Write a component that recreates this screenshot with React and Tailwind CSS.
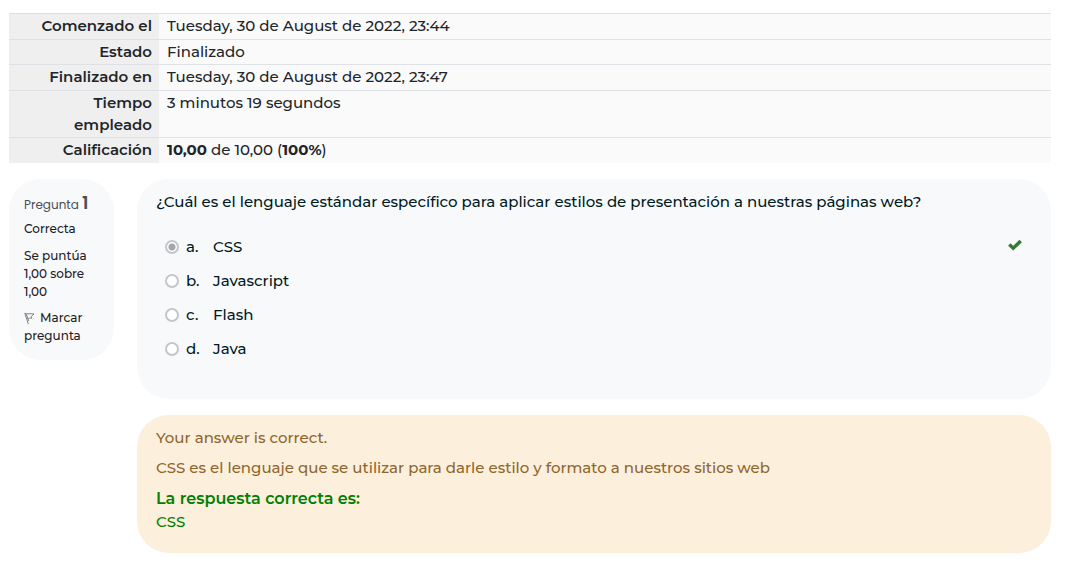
import React from 'react';

const attempt = [
  ['Comenzado el', 'Tuesday, 30 de August de 2022, 23:44'],
  ['Estado', 'Finalizado'],
  ['Finalizado en', 'Tuesday, 30 de August de 2022, 23:47'],
  ['Tiempo empleado', '3 minutos 19 segundos'],
  ['Calificación', <><b className="font-bold">10,00</b> de 10,00 (<b className="font-bold">100%</b>)</>],
];

const options = [
  ['a', 'CSS'],
  ['b', 'Javascript'],
  ['c', 'Flash'],
  ['d', 'Java'],
];

function Summary() {
  return (
    <table className="h-[150px] w-full border-collapse bg-[#fafafa] text-[#212529]">
      <tbody>
        {attempt.map(([label, value]) => (
          <tr key={label} className="border-t border-[#dee2e6] align-top">
            <th scope="row" className="w-[150px] bg-[#efefef] py-px pr-[7px] pl-6 text-right font-semibold">{label}</th>
            <td className="px-2 py-px">{value}</td>
          </tr>
        ))}
      </tbody>
    </table>
  );
}

function Info() {
  return (
    <aside className="w-[105px] shrink-0 rounded-[32px] bg-[#f8f9fb] px-[15px] pt-3 pb-[15px] text-[12px] leading-[18px] text-[#1d2125]">
      <h3 className="font-[Poppins,Inter,sans-serif] font-normal leading-6 whitespace-nowrap text-[#495057]">
        Pregunta <span className="text-[18px] font-semibold">1</span>
      </h3>
      <p className="mt-[3px]">Correcta</p>
      <p className="mt-[9px]">Se puntúa 1,00 sobre 1,00</p>
      <a href="#marcar" className="mt-2 block">
        <svg className="mr-1 inline-block size-3 align-[-2px]" viewBox="0 0 12 12" fill="none" stroke="#808080" strokeWidth="1" aria-hidden="true">
          <path d="M0.8 1.2 L4.3 12 M2.2 2.2 L4.8 9 M0.8 1.2 C3.5 2.8 6 1 10 2 L7.2 4.5 L7.6 6.4 C6 5.8 5 6.4 3.8 6.8" />
        </svg>
        Marcar pregunta
      </a>
    </aside>
  );
}

function Question() {
  return (
    <fieldset className="min-w-0 rounded-[32px] bg-[#f8f9fb] px-[19px] pt-3 pb-[33px] text-[#001a1e]">
      <legend className="float-left w-full">
        ¿Cuál es el lenguaje estándar específico para aplicar estilos de presentación a nuestras páginas web?
      </legend>
      <div className="clear-both pt-[17px] pr-2 pl-[9px]">
        {options.map(([key, text]) => (
          <div key={key} className="flex h-[34px] items-center">
            <input
              id={`option-${key}`}
              type="radio"
              name="answer"
              disabled
              defaultChecked={key === 'a'}
              className="size-[14px] appearance-none rounded-full border-2 border-[#c5c5cc] bg-white checked:bg-[radial-gradient(circle,#a5a5ac_0_3px,#fff_4px)]"
            />
            <label htmlFor={`option-${key}`} className="flex grow pl-[7px]">
              <span className="w-[27px]">{key}.</span>
              {text}
            </label>
            {key === 'a' && (
              <svg className="mr-0.5 mb-1 h-3 w-[14px]" viewBox="0 0 14 12" role="img" aria-label="Correcta">
                <path d="M1.3 5.5 L5.2 9.2 L12.7 2" fill="none" stroke="#357a32" strokeWidth="3.5" />
              </svg>
            )}
          </div>
        ))}
      </div>
    </fieldset>
  );
}

function Feedback() {
  return (
    <section className="mt-4 rounded-[32px] bg-[#fcefdc] px-[19px] pt-3 pb-5 text-[#8e662e]">
      <p>Your answer is correct.</p>
      <p className="mt-2">CSS es el lenguaje que se utilizar para darle estilo y formato a nuestros sitios web</p>
      <div className="mt-2 text-[#008000]">
        <strong className="block text-[16px] leading-6 font-semibold">La respuesta correcta es:</strong>
        <p>CSS</p>
      </div>
    </section>
  );
}

export default function App() {
  return (
    <main className="bg-white pt-[13px] pr-[19px] pb-[19px] pl-[9px] font-[Montserrat,Inter,sans-serif] text-[15px] leading-[22px] font-medium">
      <Summary />
      <div className="mt-4 flex items-start gap-[23px]">
        <Info />
        <div className="min-w-0 flex-1">
          <Question />
          <Feedback />
        </div>
      </div>
    </main>
  );
}
